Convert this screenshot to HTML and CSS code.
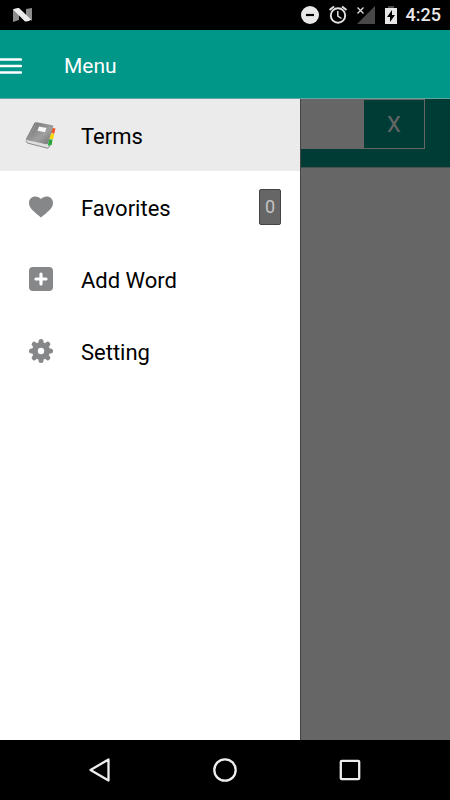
FILE: index.html
```html
<!DOCTYPE html>
<html lang="en">
<head>
<meta charset="utf-8">
<meta name="viewport" content="width=device-width, initial-scale=1">
<title>Menu</title>
<link rel="stylesheet" href="styles.css">
</head>
<body>
<div class="screen">
  <header class="status">
    <svg class="status-logo" width="20" height="16" viewBox="0 0 20 16" aria-hidden="true">
      <path d="M0 2l6 3v8l-6 2zM13 2l6-1v13l-6-4z" fill="#8d8d8d"/>
      <path d="M0 2.500Q3 .5 6 1l12 11.500q-2 2.500-6 2z" fill="#ececec"/>
    </svg>
    <div class="status-icons">
      <svg width="20" height="20" viewBox="0 0 20 20" aria-hidden="true">
        <circle cx="10" cy="10" r="9" fill="#e8e8e8"/>
        <path d="M6 10h8" stroke="#000" stroke-width="2.200"/>
      </svg>
      <svg width="20" height="20" viewBox="0 0 20 20" fill="none" stroke="#e2e2e2" aria-hidden="true">
        <circle cx="10" cy="10.500" r="7.200" stroke-width="1.900"/>
        <path d="M1.500 5L6 1.500M18.500 5L14 1.500" stroke-width="1.900"/>
        <path d="M9.800 6v5l3.700 2.500" stroke-width="1.500"/>
      </svg>
      <svg width="20" height="20" viewBox="0 0 20 20" aria-hidden="true">
        <path d="M19 1v18H1z" fill="#484848"/>
        <path d="M1 2l6.500 6.500M7.500 2L1 8.500" stroke="#000" stroke-width="4"/>
        <path d="M1.500 2.500l6 6M7.500 2.500l-6 6" stroke="#e0e0e0" stroke-width="1.300"/>
      </svg>
      <svg width="14" height="20" viewBox="0 0 14 20" aria-hidden="true">
        <path d="M4 1h6v3H4z" fill="#484848"/>
        <path d="M1 3h12v16H1z" fill="#e8e8e8"/>
        <path d="M8 5l-5 7h3v5l5-7H8z" fill="#000"/>
      </svg>
    </div>
    <time class="clock">4:25</time>
  </header>

  <div class="toolbar">
    <button class="menu-button" type="button" aria-label="Toggle menu">
      <svg width="22" height="20" viewBox="0 0 22 20" aria-hidden="true">
        <path d="M0 3.500h21M0 10h21M0 16.500h21" stroke="#fff" stroke-width="2.400" stroke-linecap="round"/>
      </svg>
    </button>
    <h1 class="title">Menu</h1>
  </div>

  <main class="body">
    <div class="content">
      <form class="search">
        <div class="search-box">
          <input class="search-input" type="text" aria-label="Search terms">
          <button class="search-clear" type="button">X</button>
        </div>
      </form>
    </div>
    <div class="scrim"></div>
    <nav class="drawer" aria-label="Menu">
      <a class="item item-active" href="#">
        <svg class="icon" width="34" height="34" viewBox="0 0 34 34" aria-hidden="true">
          <defs>
            <linearGradient id="cover" x1="0" y1="0" x2="1" y2="1">
              <stop offset="0" stop-color="#686868"/>
              <stop offset=".6" stop-color="#a0a0a0"/>
              <stop offset="1" stop-color="#6c6c6c"/>
            </linearGradient>
          </defs>
          <path d="M2 21.500l1.500 3.500L24 30l2-3 3-18-5 15z" fill="#dedede"/>
          <path d="M2 22.500q0 2 2 2.700L24 30.300l2-2.500" fill="none" stroke="#888"/>
          <path d="M28 9.800l3.500.7-1.200 5.200-4-.9z" fill="#f0562b"/>
          <path d="M26.500 15.300l3.700.6-1 5.300-4.200-.6z" fill="#f4d800"/>
          <path d="M24.700 21.200l3.800.4-.8 5.400-3.700.8z" fill="#27a63c"/>
          <path d="M12.500 4.200q-1.500-.3-2.300 1L2 20.800q-.3 1 .7 1.300l19.500 4.200q1.300.2 1.800-1L29.300 8.500q.2-1-.8-1.200z" fill="url(#cover)"/>
          <path d="M15 8.500l7.500 1.500-1.500 4.300-7.500-1.600z" fill="#f7f7f7"/>
          <path d="M12 5.500L4 20.800" stroke="#999"/>
        </svg>
        <span class="label">Terms</span>
      </a>
      <a class="item" href="#">
        <svg class="icon" width="34" height="34" viewBox="0 0 34 34" aria-hidden="true">
          <path d="M17 27.500C10.500 22 5 18.200 5 13c0-4 2.800-6.500 6.200-6.500 2.400 0 4.500 1 5.800 2.600 1.300-1.600 3.400-2.600 5.800-2.600C26.200 6.500 29 9 29 13c0 5.200-5.500 9-12 14.500z" fill="#858789"/>
        </svg>
        <span class="label">Favorites</span>
        <span class="badge">0</span>
      </a>
      <a class="item" href="#">
        <svg class="icon" width="34" height="34" viewBox="0 0 34 34" aria-hidden="true">
          <rect x="5" y="5" width="24" height="24" rx="4" fill="#858789"/>
          <path d="M17 12v10M12 17h10" stroke="#fff" stroke-width="3.200" stroke-linecap="round"/>
        </svg>
        <span class="label">Add Word</span>
      </a>
      <a class="item" href="#">
        <svg class="icon" width="34" height="34" viewBox="0 0 34 34" aria-hidden="true">
          <g stroke="#858789" stroke-width="5" stroke-linecap="round">
            <path d="M17 7.500v19M7.500 17h19M10.200 10.200l13.600 13.600M23.800 10.200L10.200 23.800"/>
          </g>
          <circle cx="17" cy="17" r="9" fill="#858789"/>
          <circle cx="17" cy="17" r="3.200" fill="#fff"/>
        </svg>
        <span class="label">Setting</span>
      </a>
    </nav>
  </main>

  <footer class="system-nav">
    <button class="nav-button" type="button" aria-label="Back">
      <svg width="26" height="26" viewBox="0 0 26 26" aria-hidden="true">
        <path d="M21.500 2.500v21L3.500 13z" fill="none" stroke="#eee" stroke-width="2.300" stroke-linejoin="round"/>
      </svg>
    </button>
    <button class="nav-button" type="button" aria-label="Home">
      <svg width="26" height="26" viewBox="0 0 26 26" aria-hidden="true">
        <circle cx="13" cy="13" r="10.700" fill="none" stroke="#eee" stroke-width="2.300"/>
      </svg>
    </button>
    <button class="nav-button" type="button" aria-label="Recent apps">
      <svg width="26" height="26" viewBox="0 0 26 26" aria-hidden="true">
        <rect x="3.800" y="3.800" width="18.400" height="18.400" rx="1" fill="none" stroke="#eee" stroke-width="2.300"/>
      </svg>
    </button>
  </footer>
</div>
</body>
</html>
```
FILE: styles.css
```css
* {
  box-sizing: border-box;
}

body {
  margin: 0;
  font-family: Roboto, "Liberation Sans", sans-serif;
  color: #000;
}

button {
  padding: 0;
  border: 0;
  background: none;
  font: inherit;
}

svg {
  display: block;
  flex: none;
}

.screen {
  display: flex;
  flex-direction: column;
  min-height: 100vh;
}

.status {
  display: flex;
  align-items: center;
  justify-content: space-between;
  height: 30px;
  padding: 0 9px 0 13px;
  background: #000;
}

.status-icons {
  display: flex;
  gap: 8px;
  margin-left: auto;
}

.clock {
  margin-left: 8px;
  color: #e8e8e8;
  font-size: 18px;
  font-weight: 500;
  line-height: 30px;
}

.toolbar {
  display: flex;
  align-items: center;
  gap: 42px;
  height: 69px;
  padding-top: 3px;
  border-bottom: 1px solid #5fa59e;
  background: #009688;
}

.title {
  margin: 0;
  color: #fff;
  font-size: 21px;
  font-weight: 400;
  line-height: 28px;
}

.body {
  position: relative;
  display: flex;
  flex: 1;
}

.content {
  flex: 1;
  background: #fff;
}

.search {
  padding: 0 25px 18px;
  border-bottom: 1px solid #b2cfcc;
  background: #009688;
}

.search-box {
  display: flex;
  height: 50px;
  border: 1px solid #fff;
}

.search-input {
  flex: 1;
  min-width: 0;
  padding: 0 12px;
  border: 0;
  background: #fff;
  font: inherit;
}

.search-clear {
  width: 60px;
  background: #009688;
  color: #fff;
  font-size: 22px;
}

.scrim {
  position: absolute;
  inset: 0;
  background: rgba(0, 0, 0, 0.6);
}

.drawer {
  position: absolute;
  top: 0;
  bottom: 0;
  left: 0;
  width: 300px;
  max-width: 80%;
  background: #fff;
  box-shadow: 1px 0 0 #444;
}

.item {
  display: flex;
  align-items: center;
  height: 72px;
  padding: 0 19px 0 24px;
  color: #000;
  text-decoration: none;
}

.item-active {
  background: #ebebeb;
}

.label {
  flex: 1;
  padding-top: 3px;
  margin-left: 23px;
  font-size: 22px;
  line-height: 30px;
}

.badge {
  width: 22px;
  border: 1px solid #444;
  border-radius: 2px;
  background: #666;
  color: #c4c4c4;
  font-size: 18px;
  line-height: 34px;
  text-align: center;
}

.system-nav {
  display: flex;
  align-items: center;
  justify-content: center;
  gap: 99px;
  height: 60px;
  background: #000;
}
```
